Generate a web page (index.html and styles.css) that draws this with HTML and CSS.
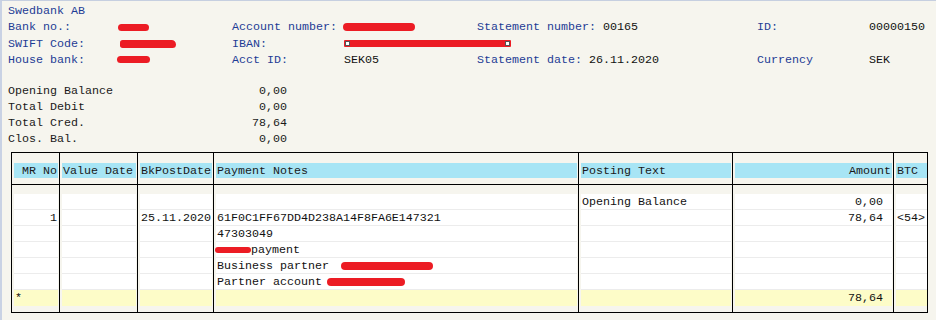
FILE: index.html
```html
<!DOCTYPE html>
<html lang="en">
<head>
<meta charset="utf-8">
<title>Bank statement</title>
<link rel="stylesheet" href="styles.css">
</head>
<body>
<div class="page">
  <div class="info">
    <div class="lbl span-all">Swedbank AB</div>

    <div class="lbl">Bank no.:</div>
    <div><span class="blob b-bank"></span></div>
    <div class="lbl">Account number:</div>
    <div><span class="blob b-acct"></span></div>
    <div><span class="lbl">Statement number: </span><span class="val">00165</span></div>
    <div class="lbl">ID:</div>
    <div class="val">00000150</div>

    <div class="lbl">SWIFT Code:</div>
    <div><span class="blob b-swift"></span></div>
    <div class="lbl">IBAN:</div>
    <div class="span-iban"><span class="blob b-iban"><span class="handle h-left"></span><span class="handle h-right"></span></span></div>

    <div class="lbl">House bank:</div>
    <div><span class="blob b-house"></span></div>
    <div class="lbl">Acct ID:</div>
    <div class="val">SEK05</div>
    <div><span class="lbl">Statement date: </span><span class="val">26.11.2020</span></div>
    <div class="lbl">Currency</div>
    <div class="val">SEK</div>
  </div>

  <div class="totals">
    <div class="tot-row"><span>Opening Balance</span><span>0,00</span></div>
    <div class="tot-row"><span>Total Debit</span><span>0,00</span></div>
    <div class="tot-row"><span>Total Cred.</span><span>78,64</span></div>
    <div class="tot-row"><span>Clos. Bal.</span><span>0,00</span></div>
  </div>

  <table class="stmt">
    <thead>
      <tr>
        <th class="w1"><div class="hd r">MR No</div></th>
        <th class="w2"><div class="hd">Value Date</div></th>
        <th class="w3"><div class="hd">BkPostDate</div></th>
        <th class="w4"><div class="hd">Payment Notes</div></th>
        <th class="w5"><div class="hd">Posting Text</div></th>
        <th class="w6"><div class="hd r">Amount</div></th>
        <th class="w7"><div class="hd">BTC</div></th>
      </tr>
    </thead>
    <tbody>
      <tr class="gap-top"><td></td><td></td><td></td><td></td><td></td><td></td><td></td></tr>
      <tr>
        <td><div class="c r"></div></td><td><div class="c"></div></td><td><div class="c"></div></td>
        <td><div class="c"></div></td><td><div class="c">Opening Balance</div></td>
        <td><div class="c amt">0,00</div></td><td><div class="c"></div></td>
      </tr>
      <tr>
        <td><div class="c r">1</div></td><td><div class="c"></div></td><td><div class="c">25.11.2020</div></td>
        <td><div class="c">61F0C1FF67DD4D238A14F8FA6E147321</div></td><td><div class="c"></div></td>
        <td><div class="c amt">78,64</div></td><td><div class="c">&lt;54&gt;</div></td>
      </tr>
      <tr>
        <td><div class="c r"></div></td><td><div class="c"></div></td><td><div class="c"></div></td>
        <td><div class="c">47303049</div></td><td><div class="c"></div></td>
        <td><div class="c amt"></div></td><td><div class="c"></div></td>
      </tr>
      <tr>
        <td><div class="c r"></div></td><td><div class="c"></div></td><td><div class="c"></div></td>
        <td><div class="c"><span class="blob b-pay"></span>payment</div></td><td><div class="c"></div></td>
        <td><div class="c amt"></div></td><td><div class="c"></div></td>
      </tr>
      <tr>
        <td><div class="c r"></div></td><td><div class="c"></div></td><td><div class="c"></div></td>
        <td><div class="c">Business partner <span class="blob b-bp"></span></div></td><td><div class="c"></div></td>
        <td><div class="c amt"></div></td><td><div class="c"></div></td>
      </tr>
      <tr>
        <td><div class="c r"></div></td><td><div class="c"></div></td><td><div class="c"></div></td>
        <td><div class="c">Partner account <span class="blob b-pa"></span></div></td><td><div class="c"></div></td>
        <td><div class="c amt"></div></td><td><div class="c"></div></td>
      </tr>
      <tr class="sum">
        <td><div class="c">*</div></td><td><div class="c"></div></td><td><div class="c"></div></td>
        <td><div class="c"></div></td><td><div class="c"></div></td>
        <td><div class="c amt">78,64</div></td><td><div class="c"></div></td>
      </tr>
      <tr class="gap-bot"><td></td><td></td><td></td><td></td><td></td><td></td><td></td></tr>
    </tbody>
  </table>
</div>
</body>
</html>
```

FILE: styles.css
```css
html, body {
  margin: 0;
  padding: 0;
  background: #f6f5ee;
}

body {
  width: 936px;
  height: 320px;
  overflow: hidden;
  font-family: "Liberation Mono", "Courier New", monospace;
  font-size: 11.67px;
  color: #111;
}

.page {
  box-sizing: border-box;
  height: 320px;
  border-top: 1px solid #c6cfe0;
  border-left: 2px solid #c9d2e4;
  padding: 2px 0 0 6px;
}

/* header information */
.info {
  display: grid;
  grid-template-columns: 110px 114px 112px 133px 280px 112px 1fr;
  grid-auto-rows: 16.33px;
  line-height: 16.33px;
  white-space: pre;
}

.span-all { grid-column: 1 / -1; }
.span-iban { grid-column: 4 / -1; }

.lbl { color: #1d3c95; }
.val { color: #111; }

.blob {
  display: inline-block;
  vertical-align: middle;
  background: #ec1c24;
  border-radius: 4px;
  position: relative;
}

.b-bank  { width: 31px; height: 7px; }
.b-swift { width: 56px; height: 8px; margin-left: 2px; border-radius: 3px 5px 4px 3px; }
.b-house { width: 33px; height: 7px; margin-left: -1px; }
.b-acct  { width: 72px; height: 8px; margin-left: -1px; }
.b-iban  { width: 167px; height: 7px; border-radius: 1px; }

.handle {
  position: absolute;
  top: 1px;
  width: 3px;
  height: 3px;
  background: #fff;
  border: 1px solid #555;
}
.h-left { left: 1px; }
.h-right { right: 1px; }

.b-pay { width: 36px; height: 6px; margin-left: -2px; border-radius: 3px; }
.b-bp  { width: 92px; height: 8px; margin-left: 5px; }
.b-pa  { width: 78px; height: 8px; margin-left: -2px; }

/* totals */
.totals {
  margin-top: 15px;
  line-height: 16px;
  color: #1a1a1a;
}

.tot-row {
  display: flex;
  justify-content: space-between;
  width: 279px;
}

/* statement table */
.stmt {
  margin-top: 5px;
  margin-left: 3px;
  border-collapse: separate;
  border-spacing: 0;
  border: 1px solid #000;
  table-layout: fixed;
  width: 917px;
  font-size: 11.67px;
}

.stmt th,
.stmt td {
  box-sizing: border-box;
  padding: 0;
  border-right: 1px solid #000;
  vertical-align: top;
  font-weight: normal;
  text-align: left;
  white-space: pre;
  overflow: hidden;
}

.stmt th:last-child,
.stmt td:last-child {
  border-right: 0;
}

.w1 { width: 48px; }
.w2 { width: 78px; }
.w3 { width: 76px; }
.w4 { width: 365px; }
.w5 { width: 154px; }
.w6 { width: 161px; }
.w7 { width: 33px; }

.stmt th {
  height: 32px;
  border-bottom: 1px solid #000;
}

.hd {
  margin: 10px 1px 0 2px;
  height: 15px;
  line-height: 16px;
  padding: 0 1px;
  background: #a7e5f5;
  color: #1a1a1a;
}

.stmt .gap-top td { height: 9px; }
.stmt .gap-bot td { height: 6px; }

.c {
  margin: 0 1px 0 2px;
  height: 15px;
  line-height: 17px;
  padding: 0 1px;
  background: #fff;
  border-bottom: 1px solid #ececec;
  color: #111;
}

.stmt td:last-child .c,
.stmt th:last-child .hd {
  margin-right: 0;
}

.r { text-align: right; }
.amt { text-align: right; padding-right: 9px; }

.sum .c {
  background: #fdfcc8;
  border-bottom: 0;
  height: 16px;
  line-height: 17px;
}
```
